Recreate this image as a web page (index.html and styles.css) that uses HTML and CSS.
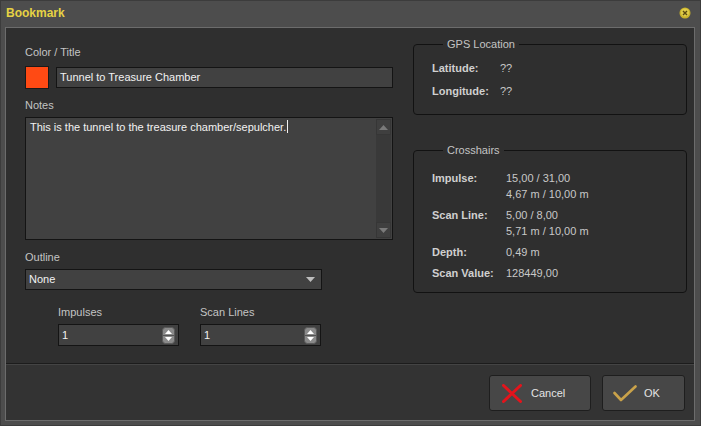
FILE: index.html
```html
<!DOCTYPE html>
<html>
<head>
<meta charset="utf-8">
<link rel="stylesheet" href="styles.css">
</head>
<body>
<div class="window">
  <div class="titlebar">
    <span class="title">Bookmark</span>
    <span class="close">
      <svg width="12" height="12" viewBox="0 0 12 12">
        <circle cx="6" cy="6" r="5.5" fill="#c9b22a"/>
        <circle cx="6" cy="5.5" r="4" fill="#e0cd4a"/>
        <path d="M4 4 L8 8 M8 4 L4 8" stroke="#5a4a10" stroke-width="1.4"/>
      </svg>
    </span>
  </div>
  <div class="client">
    <div class="main">
      <div class="left">
        <div class="label">Color / Title</div>
        <div class="title-row">
          <div class="swatch"></div>
          <div class="field title-field">Tunnel to Treasure Chamber</div>
        </div>
        <div class="label notes-label">Notes</div>
        <div class="memo">
          <div class="memo-text">This is the tunnel to the treasure chamber/sepulcher.<span class="caret"></span></div>
          <div class="scrollbar">
            <div class="sb-btn">
              <svg width="9" height="5" viewBox="0 0 9 5"><path d="M0 5 L4.5 0 L9 5 Z" fill="#7a7a7a"/></svg>
            </div>
            <div class="sb-track"></div>
            <div class="sb-btn">
              <svg width="9" height="5" viewBox="0 0 9 5"><path d="M0 0 L4.5 5 L9 0 Z" fill="#7a7a7a"/></svg>
            </div>
          </div>
        </div>
        <div class="label outline-label">Outline</div>
        <div class="field select">
          <span>None</span>
          <svg width="9" height="5" viewBox="0 0 9 5"><path d="M0 0 L4.5 5 L9 0 Z" fill="#bdbdbd"/></svg>
        </div>
        <div class="spins">
          <div class="spin-group">
            <div class="label">Impulses</div>
            <div class="field spin">
              <span>1</span>
              <span class="spin-btn">
                <svg width="13" height="17" viewBox="0 0 13 17">
                  <rect x="0.5" y="0.5" width="12" height="16" rx="3" fill="#8a8a8a" stroke="#5a5a5a"/>
                  <line x1="1" y1="8.5" x2="12" y2="8.5" stroke="#555"/>
                  <path d="M3 7 L6.5 3 L10 7 Z" fill="#fff"/>
                  <path d="M3 10 L6.5 14 L10 10 Z" fill="#fff"/>
                </svg>
              </span>
            </div>
          </div>
          <div class="spin-group">
            <div class="label">Scan Lines</div>
            <div class="field spin">
              <span>1</span>
              <span class="spin-btn">
                <svg width="13" height="17" viewBox="0 0 13 17">
                  <rect x="0.5" y="0.5" width="12" height="16" rx="3" fill="#8a8a8a" stroke="#5a5a5a"/>
                  <line x1="1" y1="8.5" x2="12" y2="8.5" stroke="#555"/>
                  <path d="M3 7 L6.5 3 L10 7 Z" fill="#fff"/>
                  <path d="M3 10 L6.5 14 L10 10 Z" fill="#fff"/>
                </svg>
              </span>
            </div>
          </div>
        </div>
      </div>
      <div class="right">
        <fieldset class="group gps">
          <legend>GPS Location</legend>
          <div class="grid gps-grid">
            <div class="k">Latitude:</div><div class="v">??</div>
            <div class="k">Longitude:</div><div class="v">??</div>
          </div>
        </fieldset>
        <fieldset class="group cross">
          <legend>Crosshairs</legend>
          <div class="grid cross-grid">
            <div class="k">Impulse:</div><div class="v">15,00 / 31,00<br>4,67 m / 10,00 m</div>
            <div class="k">Scan Line:</div><div class="v">5,00 / 8,00<br>5,71 m / 10,00 m</div>
            <div class="k">Depth:</div><div class="v">0,49 m</div>
            <div class="k">Scan Value:</div><div class="v">128449,00</div>
          </div>
        </fieldset>
      </div>
    </div>
    <div class="footer">
      <button class="btn cancel">
        <svg width="20" height="19" viewBox="0 0 20 19">
          <path d="M1.5 1.5 L18.5 17.5 M18.5 1.5 L1.5 17.5" stroke="#e3141c" stroke-width="3" stroke-linecap="round"/>
        </svg>
        <span>Cancel</span>
      </button>
      <button class="btn ok">
        <svg width="24" height="17" viewBox="0 0 24 17">
          <path d="M1.5 8 L8 15 L22.5 1.5" fill="none" stroke="#c9a24a" stroke-width="2.6" stroke-linecap="round" stroke-linejoin="round"/>
        </svg>
        <span>OK</span>
      </button>
    </div>
  </div>
</div>
</body>
</html>
```

FILE: styles.css
```css
* { box-sizing: border-box; }
html, body {
  margin: 0;
  padding: 0;
  background: #4b4b4b;
}
body {
  font-family: "Liberation Sans", Arial, sans-serif;
  font-size: 11px;
  color: #c8c8c8;
}
.window {
  width: 701px;
  height: 426px;
  background: #4d4d4d;
  border: 1px solid #3c3c3c;
  padding: 0 5px 4px 4px;
  display: flex;
  flex-direction: column;
}
.titlebar {
  height: 26px;
  flex: none;
  display: flex;
  align-items: center;
  justify-content: space-between;
  padding: 0 0 0 1px;
}
.title {
  font-weight: bold;
  font-size: 12px;
  color: #e6d244;
  margin-top: -2px;
}
.close {
  display: flex;
  margin-right: 4px;
  margin-top: -2px;
}
.client {
  flex: 1;
  display: flex;
  flex-direction: column;
  border: 1px solid #6c6c6c;
  background: #333333;
}
.main {
  height: 336px;
  flex: none;
  display: flex;
  gap: 20px;
  padding: 18px 0 0 19px;
  background: #2f2f2f;
  border-bottom: 1px solid #1c1c1c;
}
.left {
  width: 368px;
  display: flex;
  flex-direction: column;
}
.label {
  line-height: 13px;
  height: 13px;
  color: #c4c4c4;
}
.title-row {
  margin-top: 7px;
  display: flex;
  align-items: center;
  gap: 7px;
  height: 23px;
}
.swatch {
  width: 24px;
  height: 23px;
  background: #ff4a14;
  border: 1px solid #1a1a1a;
}
.field {
  background: #414141;
  border: 1px solid #141414;
  color: #f2f2f2;
  line-height: 19px;
  padding: 0 3px;
}
.title-field {
  flex: 1;
  height: 21px;
}
.notes-label { margin-top: 10px; }
.memo {
  margin-top: 5px;
  height: 123px;
  display: flex;
  background: #414141;
  border: 1px solid #141414;
  color: #f2f2f2;
}
.memo-text {
  flex: 1;
  padding: 2px 4px;
  line-height: 15px;
}
.caret {
  display: inline-block;
  width: 1px;
  height: 13px;
  background: #f2f2f2;
  vertical-align: -2px;
  margin-left: 1px;
}
.scrollbar {
  width: 15px;
  margin: 1px 1px 1px 0;
  display: flex;
  flex-direction: column;
  background: #393939;
}
.sb-btn {
  height: 16px;
  background: #3f3f3f;
  border: 1px solid #363636;
  display: flex;
  align-items: center;
  justify-content: center;
}
.sb-track { flex: 1; }
.outline-label { margin-top: 11px; }
.select {
  margin-top: 5px;
  width: 297px;
  height: 21px;
  display: flex;
  align-items: center;
  justify-content: space-between;
  padding: 0 6px 0 3px;
}
.spins {
  margin-top: 16px;
  padding-left: 33px;
  display: flex;
  gap: 21px;
}
.spin-group {
  display: flex;
  flex-direction: column;
  gap: 5px;
}
.spin {
  width: 121px;
  height: 22px;
  display: flex;
  align-items: center;
  justify-content: space-between;
  padding: 0 3px 0 3px;
  line-height: 20px;
}
.spin-btn { display: flex; }
.right {
  width: 274px;
  display: flex;
  flex-direction: column;
  margin-top: -8px;
}
.group {
  margin: 0;
  border: 1px solid #121212;
  border-radius: 4px;
  min-width: 0;
}
.group legend {
  margin-left: 11px;
  padding: 0 4px;
  line-height: 13px;
  color: #c4c4c4;
}
.gps {
  height: 77px;
  padding: 11px 0 0 18px;
}
.cross {
  margin-top: 29px;
  height: 149px;
  padding: 13px 0 0 18px;
}
.grid {
  display: grid;
}
.k {
  font-weight: bold;
  color: #d0d0d0;
}
.gps-grid {
  grid-template-columns: 68px auto;
  row-gap: 10px;
  line-height: 13px;
}
.cross-grid {
  grid-template-columns: 74px auto;
  row-gap: 5px;
  line-height: 16px;
}
.footer {
  flex: 1;
  display: flex;
  justify-content: flex-end;
  align-items: flex-start;
  gap: 11px;
  padding: 10px 9px 0 0;
  border-top: 1px solid #444;
  background: #333333;
}
.btn {
  height: 36px;
  display: flex;
  align-items: center;
  background: #474747;
  border: 1px solid #1e1e1e;
  border-radius: 3px;
  color: #e4e4e4;
  font-family: "Liberation Sans", Arial, sans-serif;
  font-size: 11px;
  padding: 0;
}
.cancel {
  width: 102px;
  padding-left: 12px;
  gap: 9px;
}
.ok {
  width: 83px;
  padding-left: 10px;
  gap: 7px;
}
```
